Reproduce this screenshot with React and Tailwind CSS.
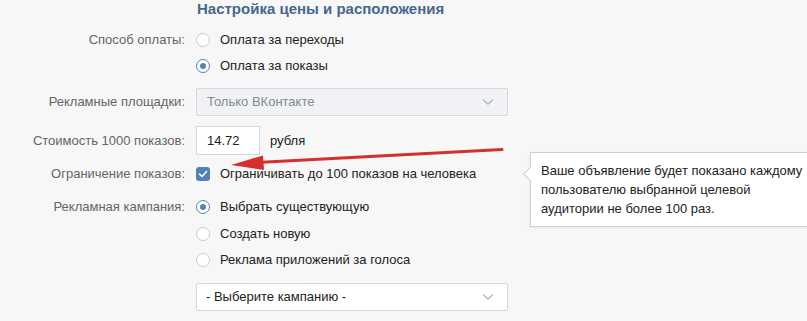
import React from 'react';

const font = { fontFamily: '"Liberation Sans", Arial, sans-serif' };

function Radio({ checked }) {
  return (
    <span
      className={`flex h-[14px] w-[14px] shrink-0 items-center justify-center rounded-full border bg-white ${
        checked ? 'border-[#5181b8]' : 'border-[#c5ccd4]'
      }`}
    >
      {checked && <span className="h-[6px] w-[6px] rounded-full bg-[#5181b8]" />}
    </span>
  );
}

function Chevron() {
  return (
    <svg width="12" height="8" viewBox="0 0 12 8" className="shrink-0">
      <path d="M1 1.5 L6 6 L11 1.5" fill="none" stroke="#aeb7c2" strokeWidth="1.4" />
    </svg>
  );
}

function Row({ label, children, className = 'h-[26px]' }) {
  return (
    <div className={`flex items-center ${className}`}>
      <div className="w-[186px] shrink-0 pr-[1px] text-right text-[#656565]">{label}</div>
      <div className="ml-[10px] flex items-center">{children}</div>
    </div>
  );
}

function RadioOption({ label, checked }) {
  return (
    <div className="flex items-center gap-[10px] text-[#222]">
      <Radio checked={checked} />
      <span>{label}</span>
    </div>
  );
}

export default function App() {
  return (
    <div className="relative h-[321px] w-[807px] overflow-hidden bg-[#f7f7f7] text-[13px] leading-[16px]" style={font}>
      <div className="flex flex-col">
        <div className="ml-[197px] h-[18px] text-[15px] font-bold leading-[18px] text-[#45678f]">
          Настройка цены и расположения
        </div>

        <Row label="Способ оплаты:" className="mt-[9px] h-[26px]">
          <RadioOption label="Оплата за переходы" />
        </Row>
        <Row label="" className="h-[26px]">
          <RadioOption label="Оплата за показы" checked />
        </Row>

        <Row label="Рекламные площадки:" className="mt-[9px] h-[28px]">
          <div className="flex h-[28px] w-[312px] items-center justify-between rounded-[2px] border border-[#d3d9de] bg-[#f0f2f5] pl-[10px] pr-[13px] text-[#828a94]">
            <span>Только ВКонтакте</span>
            <Chevron />
          </div>
        </Row>

        <Row label="Стоимость 1000 показов:" className="mt-[10px] h-[29px]">
          <div className="flex h-[29px] w-[64px] items-center border border-[#d3d9de] bg-white pl-[10px] text-[#222]">14.72</div>
          <span className="ml-[10px] text-[#222]">рубля</span>
        </Row>

        <Row label="Ограничение показов:" className="mt-[6px] h-[26px]">
          <div className="flex items-center gap-[10px] text-[#222]">
            <span className="flex h-[14px] w-[14px] items-center justify-center rounded-[3px] bg-[#5181b8]">
              <svg width="10" height="8" viewBox="0 0 10 8">
                <path d="M1.5 4.2 L4 6.5 L8.6 1.5" fill="none" stroke="#fff" strokeWidth="1.6" strokeLinecap="round" strokeLinejoin="round" />
              </svg>
            </span>
            <span>Ограничивать до 100 показов на человека</span>
          </div>
        </Row>

        <Row label="Рекламная кампания:" className="mt-[7px] h-[26px]">
          <RadioOption label="Выбрать существующую" checked />
        </Row>
        <Row label="" className="mt-[1px] h-[26px]">
          <RadioOption label="Создать новую" />
        </Row>
        <Row label="" className="h-[26px]">
          <RadioOption label="Реклама приложений за голоса" />
        </Row>

        <Row label="" className="mt-[10px] h-[28px]">
          <div className="flex h-[28px] w-[312px] items-center justify-between rounded-[2px] border border-[#d3d9de] bg-white pl-[9px] pr-[13px] text-[#222]">
            <span>- Выберите кампанию -</span>
            <Chevron />
          </div>
        </Row>
      </div>

      {/* tooltip */}
      <div className="absolute left-[530px] top-[152px] w-[300px] border border-[#c9d0d8] bg-white py-[8px] pl-[10px] leading-[19px] text-[#222] shadow-[0_1px_3px_rgba(0,0,0,0.08)]">
        <div className="w-[268px]">Ваше объявление будет показано каждому пользователю выбранной целевой аудитории не более 100 раз.</div>
        <span className="absolute left-[-6px] top-[16px] h-[10px] w-[10px] rotate-45 border-b border-l border-[#c9d0d8] bg-white" />
      </div>

      {/* red arrow drawn over the form */}
      <svg className="pointer-events-none absolute left-0 top-0" width="807" height="321">
        <path d="M502 149.5 L262 162.2" stroke="#d4302e" strokeWidth="3" strokeLinecap="round" fill="none" />
        <path d="M231 165 L263 155.5 L264 170 Z" fill="#d4302e" />
      </svg>
    </div>
  );
}
